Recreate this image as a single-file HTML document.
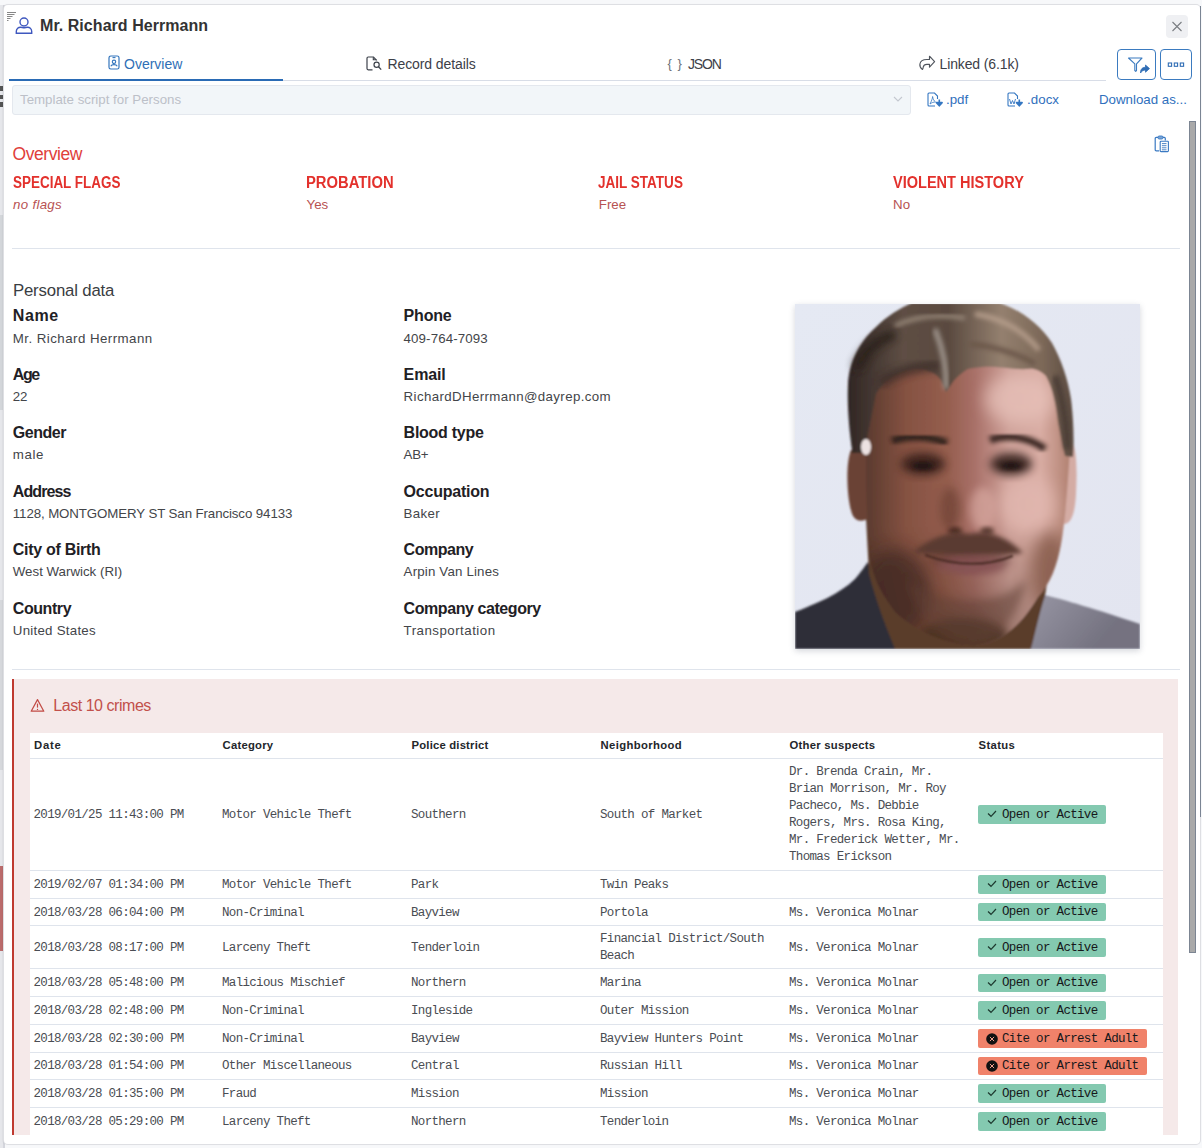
<!DOCTYPE html>
<html><head><meta charset="utf-8">
<style>
html,body{margin:0;padding:0;width:1202px;height:1148px;overflow:hidden;background:#f7f8fa;}
body{position:relative;font-family:"Liberation Sans",sans-serif;}
.a{position:absolute;white-space:nowrap;}
.t{position:absolute;white-space:nowrap;line-height:1;}
.mono{font-family:"Liberation Mono",monospace;}
#modal{position:absolute;left:4px;top:5px;width:1196px;height:1139px;background:#fff;border-radius:4px;box-shadow:0 0 0 1px #dedfe3, -1px 0 2px rgba(0,0,0,.12);}
#rb{position:absolute;left:1200px;top:6px;width:1px;height:811px;background:#7b8594;}
.lbl{font-weight:bold;font-size:15px;color:#1f2125;}
.val{font-size:13px;color:#434549;}
.red{color:#e3312c;font-weight:bold;font-size:14px;letter-spacing:-0.3px;}
.rval{color:#b75252;font-size:13px;}
.hr{position:absolute;height:1px;background:#dfe4ec;}
</style></head><body>
<!-- left strip -->
<div class="a" style="left:0;top:5px;width:4px;height:1143px;background:#e6e7eb"></div>
<div class="a" style="left:2.5px;top:5px;width:2px;height:1143px;background:#d4d5dc"></div>
<div class="a" style="left:0;top:86px;width:3px;height:5px;background:#555"></div>
<div class="a" style="left:0;top:95px;width:3px;height:4px;background:#555"></div>
<div class="a" style="left:0;top:102px;width:3px;height:5px;background:#555"></div>
<div class="a" style="left:0;top:866px;width:3px;height:85px;background:#bb6c6c"></div>
<div class="a" style="left:0;top:215px;width:3px;height:195px;background:#d3d6da"></div>
<div class="a" style="left:0;top:600px;width:3px;height:170px;background:#d6d8dc"></div>

<div id="modal"></div>
<div id="rb"></div>

<!-- header -->
<svg class="a" style="left:7px;top:12px" width="10" height="9" viewBox="0 0 10 9">
 <g fill="#6a6a6a"><rect x="0" y="0" width="9" height="0.8"/><rect x="0" y="2" width="7.5" height="0.8"/><rect x="0" y="4" width="5.5" height="0.8"/><rect x="0" y="6" width="3.5" height="0.8"/><rect x="0" y="8" width="1.5" height="0.8"/></g>
</svg>
<svg class="a" style="left:15px;top:17px" width="18" height="17" viewBox="0 0 18 17">
 <circle cx="9" cy="5" r="4" fill="none" stroke="#3f58bf" stroke-width="1.4"/>
 <path d="M1.3 16.2 H16.7 V14.5 C16.7 11.6 14.5 10.2 12.5 10.2 C11 10.2 10.3 10.8 9 10.8 C7.7 10.8 7 10.2 5.5 10.2 C3.5 10.2 1.3 11.6 1.3 14.5 Z" fill="none" stroke="#3f58bf" stroke-width="1.4"/>
</svg>
<div class="t" style="left:40px;top:17.5px;font-size:16px;font-weight:bold;color:#333;letter-spacing:0.05px">Mr. Richard Herrmann</div>

<!-- close -->
<div class="a" style="left:1166px;top:15px;width:22px;height:23px;background:#eff0f3;border-radius:4px"></div>
<svg class="a" style="left:1166px;top:15px" width="22" height="23" viewBox="0 0 22 23">
 <path d="M6.5 7 L15.5 16 M15.5 7 L6.5 16" stroke="#7a7d82" stroke-width="1.1"/>
</svg>

<!-- tabs -->
<div class="a" style="left:9px;top:80px;width:1097px;height:1px;background:#d8dde7"></div>
<div class="a" style="left:9px;top:79px;width:274px;height:2px;background:#2a6bb5"></div>
<svg class="a" style="left:108px;top:55px" width="12" height="15" viewBox="0 0 12 15">
 <rect x="1" y="1" width="10" height="13" rx="1.8" fill="none" stroke="#3476bd" stroke-width="1.2"/>
 <path d="M4.5 2.6 H7.5" stroke="#3476bd" stroke-width="1.1"/>
 <circle cx="6" cy="6.8" r="1.7" fill="none" stroke="#3476bd" stroke-width="1.1"/>
 <path d="M2.8 11.3 C3.3 9.9 4.3 9.6 6 9.6 C7.7 9.6 8.7 9.9 9.2 11.3" fill="none" stroke="#3476bd" stroke-width="1.1"/>
</svg>
<div class="t" style="left:124px;top:56.5px;font-size:14px;color:#2f6fb6">Overview</div>

<svg class="a" style="left:365.5px;top:55.5px" width="18" height="16" viewBox="0 0 18 16">
 <path d="M6.5 13.8 H2.2 C1.5 13.8 1 13.3 1 12.6 V2.2 C1 1.5 1.5 1 2.2 1 H7.5 L10.5 4.2 V4.6" fill="none" stroke="#3d424b" stroke-width="1.2"/>
 <path d="M7.3 1.2 V3.8 H10.3" fill="none" stroke="#3d424b" stroke-width="1.1"/>
 <circle cx="10.6" cy="8.8" r="2.6" fill="none" stroke="#3d424b" stroke-width="1.2"/>
 <path d="M12.5 10.8 L15.2 13.6" stroke="#3d424b" stroke-width="1.3"/>
</svg>
<div class="t" style="left:387.5px;top:56.5px;font-size:14px;color:#3c4048;letter-spacing:-0.1px">Record details</div>

<div class="t" style="left:667.5px;top:56.5px;font-size:13px;color:#6d7178;letter-spacing:1px">{ }</div>
<div class="t" style="left:688px;top:56.5px;font-size:14px;color:#3c4048;letter-spacing:-1.2px">JSON</div>

<svg class="a" style="left:918px;top:55px" width="18" height="16" viewBox="0 0 18 16">
 <path d="M11.5 1.2 L16.6 6.7 L11.5 12.2 V9.3 H8.8 C6.8 9.3 5.6 10.3 5.3 11.8 C5.2 12.8 5 13.8 4.5 14.5 C2.5 13 1.6 11 1.9 9 C2.4 6.3 5 4.5 8.8 4.5 H11.5 Z" fill="none" stroke="#50555d" stroke-width="1.15" stroke-linejoin="round"/>
</svg>
<div class="t" style="left:939.5px;top:56.5px;font-size:14px;color:#3c4048;letter-spacing:-0.12px">Linked (6.1k)</div>

<!-- buttons -->
<div class="a" style="left:1117px;top:49px;width:36.5px;height:29px;border:1.2px solid #3b7bc0;border-radius:4px"></div>
<svg class="a" style="left:1117px;top:49px" width="39" height="31" viewBox="0 0 39 31">
 <path d="M11.5 9 H25 L19.5 14.8 V21.5 L18.7 22.3 L17.8 21.5 V14.8 Z" fill="none" stroke="#3b7bc0" stroke-width="1.1" stroke-linejoin="round"/>
 <path d="M23.5 24 C23.5 20 25.5 18.3 28.5 18.3 V16 L32.5 19.6 L28.5 23.2 V21 C26.3 21 24.8 22 23.5 24 Z" fill="#2f6db5" stroke="#2f6db5" stroke-width="0.8" stroke-linejoin="round"/>
</svg>
<div class="a" style="left:1160px;top:49px;width:30px;height:29px;border:1.2px solid #3b7bc0;border-radius:4px"></div>
<svg class="a" style="left:1160px;top:49px" width="33" height="31" viewBox="0 0 33 31">
 <g fill="none" stroke="#2f6db5" stroke-width="1.1"><rect x="8.3" y="14" width="3.3" height="3.3"/><rect x="14.3" y="14" width="3.3" height="3.3"/><rect x="20.3" y="14" width="3.3" height="3.3"/></g>
</svg>

<!-- select -->
<div class="a" style="left:12px;top:85px;width:897px;height:28px;background:#f2f6f9;border:1px solid #e4e8ee;border-radius:3px"></div>
<div class="t" style="left:20px;top:93px;font-size:13.3px;color:#bcc0c8">Template script for Persons</div>
<svg class="a" style="left:892px;top:94px" width="12" height="10" viewBox="0 0 12 10">
 <path d="M2 3 L6 7 L10 3" fill="none" stroke="#c4c8d0" stroke-width="1.1"/>
</svg>

<!-- download links -->
<svg class="a" style="left:927px;top:92px" width="17" height="16" viewBox="0 0 17 16">
 <path d="M8 14 H2 C1.4 14 1 13.6 1 13 V2 C1 1.4 1.4 1 2 1 H7.5 L10.5 4 V7" fill="none" stroke="#3577c2" stroke-width="1.1"/>
 <path d="M3 12 C4.5 9 5.5 6.5 5.6 4.5 C6 7 7 9 8.5 10 C6.5 10 5 10.5 3 12" fill="none" stroke="#3577c2" stroke-width="0.8"/>
 <path d="M12.3 7.5 V12.5 M9.5 10.6 L12.3 13.8 L15.1 10.6 Z" fill="#3577c2" stroke="#3577c2" stroke-width="1.6" stroke-linejoin="round"/>
</svg>
<div class="t" style="left:946px;top:92.5px;font-size:13.3px;color:#2f70bd">.pdf</div>
<svg class="a" style="left:1007px;top:92px" width="17" height="16" viewBox="0 0 17 16">
 <path d="M8 14 H2 C1.4 14 1 13.6 1 13 V2 C1 1.4 1.4 1 2 1 H7.5 L10.5 4 V7" fill="none" stroke="#3577c2" stroke-width="1.1"/>
 <path d="M2.5 7 L4 12 L5.5 8.5 L7 12 L8.5 7" fill="none" stroke="#3577c2" stroke-width="0.9"/>
 <path d="M12.3 7.5 V12.5 M9.5 10.6 L12.3 13.8 L15.1 10.6 Z" fill="#3577c2" stroke="#3577c2" stroke-width="1.6" stroke-linejoin="round"/>
</svg>
<div class="t" style="left:1027px;top:92.5px;font-size:13.3px;color:#2f70bd;letter-spacing:0.05px">.docx</div>
<div class="t" style="left:1099px;top:92.5px;font-size:13.3px;color:#2f70bd">Download as...</div>

<!-- scrollbar -->
<div class="a" style="left:1189px;top:121px;width:5px;height:830px;background:#a9a9a9;border:1px solid #7c8592"></div>

<!-- clipboard -->
<svg class="a" style="left:1154px;top:135px" width="16" height="18" viewBox="0 0 16 18">
 <path d="M5.2 15.8 H2.3 C1.6 15.8 1.2 15.4 1.2 14.7 V3.4 C1.2 2.8 1.6 2.4 2.3 2.4 H10.3 C10.9 2.4 11.3 2.8 11.3 3.4 V5.5" fill="none" stroke="#3a79c2" stroke-width="1.2"/>
 <rect x="4" y="1" width="5" height="3" rx="1.2" fill="#7aa6d8" stroke="#3a79c2" stroke-width="0.9"/>
 <rect x="6.2" y="6.2" width="8.2" height="10.4" rx="0.8" fill="#fff" stroke="#3a79c2" stroke-width="1.1"/>
 <path d="M7.9 8.6 H12.5 M7.9 10.7 H12.5 M7.9 12.8 H12.5 M7.9 14.8 H12.5" stroke="#2f6fbb" stroke-width="0.85"/>
</svg>


<div class="t" style="left:12.5px;top:145.72px;font:normal normal 17.5px/1 'Liberation Sans';color:#e0403b;letter-spacing:-0.429px;">Overview</div>
<div class="t" style="left:12.6px;top:174.64px;font:normal bold 15.6px/1 'Liberation Sans';color:#e3312c;letter-spacing:0.000px;transform:scaleX(0.8629);transform-origin:0 0;">SPECIAL FLAGS</div>
<div class="t" style="left:13.1px;top:197.50px;font:italic normal 13.3px/1 'Liberation Sans';color:#b75252;letter-spacing:0.286px;">no flags</div>
<div class="t" style="left:306px;top:174.64px;font:normal bold 15.6px/1 'Liberation Sans';color:#e3312c;letter-spacing:0.000px;transform:scaleX(0.9484);transform-origin:0 0;">PROBATION</div>
<div class="t" style="left:306.5px;top:197.50px;font:normal normal 13.3px/1 'Liberation Sans';color:#b75252;letter-spacing:0.000px;">Yes</div>
<div class="t" style="left:598.3px;top:174.64px;font:normal bold 15.6px/1 'Liberation Sans';color:#e3312c;letter-spacing:0.000px;transform:scaleX(0.8673);transform-origin:0 0;">JAIL STATUS</div>
<div class="t" style="left:598.8px;top:197.50px;font:normal normal 13.3px/1 'Liberation Sans';color:#b75252;letter-spacing:0.000px;">Free</div>
<div class="t" style="left:892.6px;top:174.64px;font:normal bold 15.6px/1 'Liberation Sans';color:#e3312c;letter-spacing:0.000px;transform:scaleX(0.9321);transform-origin:0 0;">VIOLENT HISTORY</div>
<div class="t" style="left:893.1px;top:197.50px;font:normal normal 13.3px/1 'Liberation Sans';color:#b75252;letter-spacing:0.000px;">No</div>
<div class="hr" style="left:12px;top:248px;width:1168px"></div>
<div class="t" style="left:12.9px;top:282.72px;font:normal normal 16.8px/1 'Liberation Sans';color:#3a3d42;letter-spacing:-0.167px;">Personal data</div>
<div class="t" style="left:12.8px;top:308.30px;font:normal bold 16px/1 'Liberation Sans';color:#1f2125;letter-spacing:0.567px;">Name</div>
<div class="t" style="left:12.8px;top:331.59px;font:normal normal 13.3px/1 'Liberation Sans';color:#434549;letter-spacing:0.453px;">Mr. Richard Herrmann</div>
<div class="t" style="left:403.6px;top:308.30px;font:normal bold 16px/1 'Liberation Sans';color:#1f2125;letter-spacing:-0.200px;">Phone</div>
<div class="t" style="left:403.6px;top:331.59px;font:normal normal 13.3px/1 'Liberation Sans';color:#434549;letter-spacing:0.109px;">409-764-7093</div>
<div class="t" style="left:12.8px;top:366.75px;font:normal bold 16px/1 'Liberation Sans';color:#1f2125;letter-spacing:-1.400px;">Age</div>
<div class="t" style="left:12.8px;top:390.04px;font:normal normal 13.3px/1 'Liberation Sans';color:#434549;letter-spacing:-0.300px;">22</div>
<div class="t" style="left:403.6px;top:366.75px;font:normal bold 16px/1 'Liberation Sans';color:#1f2125;letter-spacing:-0.125px;">Email</div>
<div class="t" style="left:403.6px;top:390.04px;font:normal normal 13.3px/1 'Liberation Sans';color:#434549;letter-spacing:0.365px;">RichardDHerrmann@dayrep.com</div>
<div class="t" style="left:12.8px;top:425.20px;font:normal bold 16px/1 'Liberation Sans';color:#1f2125;letter-spacing:-0.480px;">Gender</div>
<div class="t" style="left:12.8px;top:448.49px;font:normal normal 13.3px/1 'Liberation Sans';color:#434549;letter-spacing:0.600px;">male</div>
<div class="t" style="left:403.6px;top:425.20px;font:normal bold 16px/1 'Liberation Sans';color:#1f2125;letter-spacing:-0.267px;">Blood type</div>
<div class="t" style="left:403.6px;top:448.49px;font:normal normal 13.3px/1 'Liberation Sans';color:#434549;letter-spacing:-0.250px;">AB+</div>
<div class="t" style="left:12.8px;top:483.65px;font:normal bold 16px/1 'Liberation Sans';color:#1f2125;letter-spacing:-0.900px;">Address</div>
<div class="t" style="left:12.8px;top:506.94px;font:normal normal 13.3px/1 'Liberation Sans';color:#434549;letter-spacing:-0.105px;">1128, MONTGOMERY ST San Francisco 94133</div>
<div class="t" style="left:403.6px;top:483.65px;font:normal bold 16px/1 'Liberation Sans';color:#1f2125;letter-spacing:-0.233px;">Occupation</div>
<div class="t" style="left:403.6px;top:506.94px;font:normal normal 13.3px/1 'Liberation Sans';color:#434549;letter-spacing:0.325px;">Baker</div>
<div class="t" style="left:12.8px;top:542.10px;font:normal bold 16px/1 'Liberation Sans';color:#1f2125;letter-spacing:-0.292px;">City of Birth</div>
<div class="t" style="left:12.8px;top:565.40px;font:normal normal 13.3px/1 'Liberation Sans';color:#434549;letter-spacing:0.000px;">West Warwick (RI)</div>
<div class="t" style="left:403.6px;top:542.10px;font:normal bold 16px/1 'Liberation Sans';color:#1f2125;letter-spacing:-0.467px;">Company</div>
<div class="t" style="left:403.6px;top:565.40px;font:normal normal 13.3px/1 'Liberation Sans';color:#434549;letter-spacing:0.171px;">Arpin Van Lines</div>
<div class="t" style="left:12.8px;top:600.55px;font:normal bold 16px/1 'Liberation Sans';color:#1f2125;letter-spacing:-0.433px;">Country</div>
<div class="t" style="left:12.8px;top:623.85px;font:normal normal 13.3px/1 'Liberation Sans';color:#434549;letter-spacing:0.250px;">United States</div>
<div class="t" style="left:403.6px;top:600.55px;font:normal bold 16px/1 'Liberation Sans';color:#1f2125;letter-spacing:-0.427px;">Company category</div>
<div class="t" style="left:403.6px;top:623.85px;font:normal normal 13.3px/1 'Liberation Sans';color:#434549;letter-spacing:0.477px;">Transportation</div>
<div class="a" style="left:794.5px;top:304px;width:345px;height:345px;box-shadow:0 2px 6px rgba(60,70,90,.22);overflow:hidden;background:#e3e4ee">
<svg width="345" height="345" viewBox="0 0 345 345" style="display:block">
 <defs>
  <filter id="b1" x="-20%" y="-20%" width="140%" height="140%"><feGaussianBlur stdDeviation="1.2"/></filter>
  <filter id="b2" x="-20%" y="-20%" width="140%" height="140%"><feGaussianBlur stdDeviation="2"/></filter>
  <filter id="b4" x="-30%" y="-30%" width="160%" height="160%"><feGaussianBlur stdDeviation="4"/></filter>
  <filter id="b8" x="-50%" y="-50%" width="200%" height="200%"><feGaussianBlur stdDeviation="8"/></filter>
  <linearGradient id="bg" x1="0" y1="0" x2="1" y2="1"><stop offset="0" stop-color="#e5e9f3"/><stop offset="1" stop-color="#e3e5f0"/></linearGradient>
  <linearGradient id="sr" x1="236" y1="290" x2="300" y2="345" gradientUnits="userSpaceOnUse"><stop offset="0" stop-color="#9896a4"/><stop offset="1" stop-color="#747280"/></linearGradient>
  <linearGradient id="fg" x1="70" y1="0" x2="276" y2="0" gradientUnits="userSpaceOnUse">
   <stop offset="0" stop-color="#5a3a2e"/><stop offset="0.2" stop-color="#855242"/><stop offset="0.4" stop-color="#955e4e"/><stop offset="0.53" stop-color="#a87068"/><stop offset="0.7" stop-color="#cfa29a"/><stop offset="0.85" stop-color="#d9ada4"/><stop offset="1" stop-color="#b08070"/>
  </linearGradient>
  <linearGradient id="fv" x1="0" y1="220" x2="0" y2="340" gradientUnits="userSpaceOnUse"><stop offset="0" stop-color="#3c2418" stop-opacity="0"/><stop offset="1" stop-color="#3c2418" stop-opacity="0.35"/></linearGradient>
  <linearGradient id="hg" x1="50" y1="0" x2="280" y2="0" gradientUnits="userSpaceOnUse"><stop offset="0" stop-color="#2e2422"/><stop offset="0.25" stop-color="#5e4e44"/><stop offset="0.45" stop-color="#5a4a40"/><stop offset="0.68" stop-color="#94806f"/><stop offset="0.86" stop-color="#7c6858"/><stop offset="1" stop-color="#5a4a40"/></linearGradient>
  <clipPath id="fc"><path d="M70 100 C72 62 110 52 170 52 C240 50 276 65 276 122 C274 170 270 220 266 240 C262 262 255 280 243 293 C228 318 210 338 180 342 C150 342 118 325 100 308 C88 292 80 278 76 260 C72 230 70 180 72 100 Z"/></clipPath>
 </defs>
 <rect width="345" height="345" fill="url(#bg)"/>
 <g filter="url(#b1)">
 <!-- shirt left -->
 <path d="M0 308 C20 300 45 290 60 275 C66 268 70 262 73 258 L85 300 L105 345 L0 345 Z" fill="#2e2e38"/>
 <!-- shirt right -->
 <path d="M236 345 C238 325 240 305 246 290 C270 296 300 305 345 320 L345 345 Z" fill="url(#sr)"/>
 <!-- neck -->
 <path d="M71 214 L262 214 L250 292 C244 310 240 330 236 345 L100 345 C90 320 82 300 74 270 Z" fill="#5a3c2c"/>
 <!-- ears -->
 <path d="M56 146 C50 160 52 200 58 212 C62 218 68 218 74 214 L90 214 L90 150 Z" fill="#6a4234"/>
 <path d="M270 135 C280 132 283 150 281 190 C280 210 276 220 269 220 L250 220 L250 135 Z" fill="#d4aca4"/>
 <!-- face base -->
 <path d="M70 100 C72 62 110 52 170 52 C240 50 276 65 276 122 C274 170 270 220 266 240 C262 262 255 280 243 293 C228 318 210 338 180 342 C150 342 118 325 100 308 C88 292 80 278 76 260 C72 230 70 180 72 100 Z" fill="url(#fg)"/>
 <g clip-path="url(#fc)">
  <rect x="60" y="200" width="230" height="150" fill="url(#fv)"/>
  <ellipse cx="100" cy="290" rx="35" ry="45" fill="#3e2820" opacity="0.7" filter="url(#b8)"/>
  <ellipse cx="225" cy="95" rx="35" ry="25" fill="#e6c0b8" opacity="0.8" filter="url(#b8)"/>
  <ellipse cx="232" cy="200" rx="28" ry="28" fill="#e2b8b0" opacity="0.8" filter="url(#b8)"/>
  <ellipse cx="255" cy="268" rx="20" ry="40" fill="#8a5e50" opacity="0.9" filter="url(#b8)"/>
  <!-- eye sockets -->
  <ellipse cx="128" cy="160" rx="22" ry="11" fill="#3a241c" opacity="0.95" filter="url(#b4)"/>
  <ellipse cx="216" cy="160" rx="21" ry="11" fill="#3a2620" opacity="0.95" filter="url(#b4)"/>
  <!-- nose -->
  <ellipse cx="188" cy="205" rx="13" ry="22" fill="#d8a8a0" opacity="0.7" filter="url(#b4)"/>
  <ellipse cx="155" cy="205" rx="10" ry="22" fill="#6e4236" opacity="0.7" filter="url(#b4)"/>
  <ellipse cx="160" cy="227" rx="7" ry="4" fill="#4a2c24" filter="url(#b2)"/>
  <ellipse cx="192" cy="227" rx="7" ry="4" fill="#5a3a30" filter="url(#b2)"/>
  <ellipse cx="168" cy="332" rx="45" ry="18" fill="#4a3024" opacity="0.85" filter="url(#b4)"/>
  <ellipse cx="176" cy="256" rx="40" ry="10" fill="#5a3430" opacity="0.6" filter="url(#b4)"/>
  <!-- beard -->
  <path d="M112 275 C120 310 145 338 178 340 C205 338 225 310 232 275 C215 290 200 296 175 296 C150 296 128 290 112 275 Z" fill="#604034" opacity="0.55" filter="url(#b4)"/>
 </g>
 <!-- hair -->
 <path d="M57 146 C54 125 52 100 53 80 C54 60 62 40 81 23 C92 12 105 4 117 -1 L205 -1 C225 6 245 20 257 39 C266 55 273 75 276 95 C279 120 279 140 278 153 L270 152 C267 140 265 128 263 118 C261 100 258 85 251 72 C245 66 238 64 233 65 C220 66 200 62 188 63 C180 64 176 64 173 65 C165 70 160 75 158 78 C155 82 153 86 151 88 C148 80 146 76 145 75 C140 68 130 65 120 65 C110 66 100 70 90 78 C85 84 82 88 81 90 C79 100 77 110 75 120 C73 128 72 134 72 140 L74 149 L56 149 Z" fill="url(#hg)"/>
 <path d="M62 65 C70 45 85 35 100 30" fill="none" stroke="#2a201c" stroke-width="10" filter="url(#b4)"/>
 <path d="M85 80 C100 68 120 62 145 62" fill="none" stroke="#3a2c26" stroke-width="8" filter="url(#b4)"/>
 <path d="M140 25 C148 45 152 65 151 85" fill="none" stroke="#a0968e" stroke-width="5" filter="url(#b2)"/>
 <path d="M100 22 C120 12 145 10 170 14" fill="none" stroke="#9a8a7c" stroke-width="4" filter="url(#b2)"/>
 <path d="M180 10 C205 14 228 26 244 46" fill="none" stroke="#b49c8a" stroke-width="5" filter="url(#b2)"/>
 <path d="M175 40 C195 42 220 48 240 60" fill="none" stroke="#6a5648" stroke-width="5" filter="url(#b2)"/>
 <path d="M260 72 C267 92 271 115 273 145" fill="none" stroke="#4e4038" stroke-width="8" filter="url(#b2)"/>
 <!-- light spot -->
 <ellipse cx="71" cy="143" rx="5" ry="8" fill="#ece2e2"/>
 <!-- eyebrows -->
 <path d="M97 137 C112 131 135 132 152 139" stroke="#2e201a" stroke-width="7.5" fill="none" filter="url(#b2)"/>
 <path d="M195 136 C210 130 232 132 250 145" stroke="#3a2820" stroke-width="7.5" fill="none" filter="url(#b2)"/>
 <!-- eyes -->
 <ellipse cx="128" cy="162" rx="11" ry="4" fill="#221816" filter="url(#b2)"/>
 <ellipse cx="216" cy="162" rx="11" ry="4" fill="#221816" filter="url(#b2)"/>
 <!-- mustache -->
 <path d="M118 248 C138 232 158 226 174 230 C192 226 212 232 228 249 C205 252 190 250 174 251 C155 250 140 252 118 248 Z" fill="#5a3a30" filter="url(#b2)"/>
 <!-- mouth -->
 <ellipse cx="176" cy="262" rx="34" ry="8" fill="#8a5558" opacity="0.85" filter="url(#b4)"/>
 <path d="M130 251 C160 262 190 263 218 252" stroke="#4e2e28" stroke-width="2.5" fill="none"/>
 </g>
</svg></div>

<div class="hr" style="left:12px;top:669px;width:1168px"></div>
<style>
.th{font-weight:bold;font-size:11.5px;color:#23262b}
.td{font-size:12.5px;line-height:17px;color:#4a4d53;letter-spacing:-0.68px}
.badge{height:18.5px;border-radius:2px}
.badge.g{background:#84c9b0}
.badge.r{background:#f0826a}
.bt{position:absolute;left:24px;top:1.6px;font-family:"Liberation Mono",monospace;font-size:12.5px;line-height:17px;color:#16181b;letter-spacing:-0.68px}
</style>
<div class="a" style="left:12px;top:679px;width:1166px;height:456px;background:#f5e9e9"></div>
<div class="a" style="left:12px;top:679px;width:2px;height:456px;background:#bf3a30"></div>
<svg class="a" style="left:30px;top:698px" width="15" height="15" viewBox="0 0 15 15">
 <path d="M7.5 1.6 L13.8 13.2 H1.2 Z" fill="none" stroke="#c24b45" stroke-width="1.2" stroke-linejoin="round"/>
 <path d="M7.5 5.6 V9.6" stroke="#c24b45" stroke-width="1.2"/><circle cx="7.5" cy="11.4" r="0.7" fill="#c24b45"/>
</svg>
<div class="t" style="left:53.3px;top:698.20px;font:normal normal 16px/1 'Liberation Sans';color:#c2504b;letter-spacing:-0.462px;">Last 10 crimes</div>
<div class="a" style="left:30px;top:733px;width:1133px;height:402px;background:#fff"></div>
<div class="t" style="left:34.0px;top:740.00px;font:normal bold 11.3px/1 'Liberation Sans';color:#23262b;letter-spacing:0.733px;">Date</div>
<div class="t" style="left:222.5px;top:740.00px;font:normal bold 11.3px/1 'Liberation Sans';color:#23262b;letter-spacing:0.229px;">Category</div>
<div class="t" style="left:411.5px;top:740.00px;font:normal bold 11.3px/1 'Liberation Sans';color:#23262b;letter-spacing:0.186px;">Police district</div>
<div class="t" style="left:600.5px;top:740.00px;font:normal bold 11.3px/1 'Liberation Sans';color:#23262b;letter-spacing:0.355px;">Neighborhood</div>
<div class="t" style="left:789.5px;top:740.00px;font:normal bold 11.3px/1 'Liberation Sans';color:#23262b;letter-spacing:0.254px;">Other suspects</div>
<div class="t" style="left:978.5px;top:740.00px;font:normal bold 11.3px/1 'Liberation Sans';color:#23262b;letter-spacing:0.360px;">Status</div>
<div class="a" style="left:30px;top:758.0px;width:1133px;height:1px;background:#dfe4ec"></div>
<div class="a" style="left:30px;top:870.1px;width:1133px;height:1px;background:#dfe4ec"></div>
<div class="a" style="left:30px;top:897.9px;width:1133px;height:1px;background:#dfe4ec"></div>
<div class="a" style="left:30px;top:925.4px;width:1133px;height:1px;background:#dfe4ec"></div>
<div class="a" style="left:30px;top:968.4px;width:1133px;height:1px;background:#dfe4ec"></div>
<div class="a" style="left:30px;top:996.1px;width:1133px;height:1px;background:#dfe4ec"></div>
<div class="a" style="left:30px;top:1023.9px;width:1133px;height:1px;background:#dfe4ec"></div>
<div class="a" style="left:30px;top:1051.9px;width:1133px;height:1px;background:#dfe4ec"></div>
<div class="a" style="left:30px;top:1078.8px;width:1133px;height:1px;background:#dfe4ec"></div>
<div class="a" style="left:30px;top:1107.2px;width:1133px;height:1px;background:#dfe4ec"></div>
<div class="a mono td" style="left:33.5px;top:806.95px">2019/01/25 11:43:00 PM</div>
<div class="a mono td" style="left:222px;top:806.95px">Motor Vehicle Theft</div>
<div class="a mono td" style="left:411px;top:806.95px">Southern</div>
<div class="a mono td" style="left:600px;top:806.95px">South of Market</div>
<div class="a mono td" style="left:789px;top:764.45px">Dr. Brenda Crain, Mr.<br>Brian Morrison, Mr. Roy<br>Pacheco, Ms. Debbie<br>Rogers, Mrs. Rosa King,<br>Mr. Frederick Wetter, Mr.<br>Thomas Erickson</div>
<div class="a badge g" style="left:978px;top:805.30px;width:128px"><svg class="a" style="left:9px;top:5px" width="10" height="8" viewBox="0 0 10 8"><path d="M1 3.5 L4 6.3 L9 1" fill="none" stroke="#1e3a30" stroke-width="1.2"/></svg><span class="bt">Open or Active</span></div>
<div class="a mono td" style="left:33.5px;top:876.90px">2019/02/07 01:34:00 PM</div>
<div class="a mono td" style="left:222px;top:876.90px">Motor Vehicle Theft</div>
<div class="a mono td" style="left:411px;top:876.90px">Park</div>
<div class="a mono td" style="left:600px;top:876.90px">Twin Peaks</div>
<div class="a badge g" style="left:978px;top:875.25px;width:128px"><svg class="a" style="left:9px;top:5px" width="10" height="8" viewBox="0 0 10 8"><path d="M1 3.5 L4 6.3 L9 1" fill="none" stroke="#1e3a30" stroke-width="1.2"/></svg><span class="bt">Open or Active</span></div>
<div class="a mono td" style="left:33.5px;top:904.55px">2018/03/28 06:04:00 PM</div>
<div class="a mono td" style="left:222px;top:904.55px">Non-Criminal</div>
<div class="a mono td" style="left:411px;top:904.55px">Bayview</div>
<div class="a mono td" style="left:600px;top:904.55px">Portola</div>
<div class="a mono td" style="left:789px;top:904.55px">Ms. Veronica Molnar</div>
<div class="a badge g" style="left:978px;top:902.90px;width:128px"><svg class="a" style="left:9px;top:5px" width="10" height="8" viewBox="0 0 10 8"><path d="M1 3.5 L4 6.3 L9 1" fill="none" stroke="#1e3a30" stroke-width="1.2"/></svg><span class="bt">Open or Active</span></div>
<div class="a mono td" style="left:33.5px;top:939.80px">2018/03/28 08:17:00 PM</div>
<div class="a mono td" style="left:222px;top:939.80px">Larceny Theft</div>
<div class="a mono td" style="left:411px;top:939.80px">Tenderloin</div>
<div class="a mono td" style="left:600px;top:931.30px">Financial District/South<br>Beach</div>
<div class="a mono td" style="left:789px;top:939.80px">Ms. Veronica Molnar</div>
<div class="a badge g" style="left:978px;top:938.15px;width:128px"><svg class="a" style="left:9px;top:5px" width="10" height="8" viewBox="0 0 10 8"><path d="M1 3.5 L4 6.3 L9 1" fill="none" stroke="#1e3a30" stroke-width="1.2"/></svg><span class="bt">Open or Active</span></div>
<div class="a mono td" style="left:33.5px;top:975.15px">2018/03/28 05:48:00 PM</div>
<div class="a mono td" style="left:222px;top:975.15px">Malicious Mischief</div>
<div class="a mono td" style="left:411px;top:975.15px">Northern</div>
<div class="a mono td" style="left:600px;top:975.15px">Marina</div>
<div class="a mono td" style="left:789px;top:975.15px">Ms. Veronica Molnar</div>
<div class="a badge g" style="left:978px;top:973.50px;width:128px"><svg class="a" style="left:9px;top:5px" width="10" height="8" viewBox="0 0 10 8"><path d="M1 3.5 L4 6.3 L9 1" fill="none" stroke="#1e3a30" stroke-width="1.2"/></svg><span class="bt">Open or Active</span></div>
<div class="a mono td" style="left:33.5px;top:1002.90px">2018/03/28 02:48:00 PM</div>
<div class="a mono td" style="left:222px;top:1002.90px">Non-Criminal</div>
<div class="a mono td" style="left:411px;top:1002.90px">Ingleside</div>
<div class="a mono td" style="left:600px;top:1002.90px">Outer Mission</div>
<div class="a mono td" style="left:789px;top:1002.90px">Ms. Veronica Molnar</div>
<div class="a badge g" style="left:978px;top:1001.25px;width:128px"><svg class="a" style="left:9px;top:5px" width="10" height="8" viewBox="0 0 10 8"><path d="M1 3.5 L4 6.3 L9 1" fill="none" stroke="#1e3a30" stroke-width="1.2"/></svg><span class="bt">Open or Active</span></div>
<div class="a mono td" style="left:33.5px;top:1030.80px">2018/03/28 02:30:00 PM</div>
<div class="a mono td" style="left:222px;top:1030.80px">Non-Criminal</div>
<div class="a mono td" style="left:411px;top:1030.80px">Bayview</div>
<div class="a mono td" style="left:600px;top:1030.80px">Bayview Hunters Point</div>
<div class="a mono td" style="left:789px;top:1030.80px">Ms. Veronica Molnar</div>
<div class="a badge r" style="left:978px;top:1029.15px;width:169px"><svg class="a" style="left:8px;top:3.5px" width="12" height="12" viewBox="0 0 12 12"><circle cx="6" cy="6" r="5.8" fill="#111"/><path d="M3.9 3.9 L8.1 8.1 M8.1 3.9 L3.9 8.1" stroke="#f3a18e" stroke-width="1"/></svg><span class="bt">Cite or Arrest Adult</span></div>
<div class="a mono td" style="left:33.5px;top:1058.25px">2018/03/28 01:54:00 PM</div>
<div class="a mono td" style="left:222px;top:1058.25px">Other Miscellaneous</div>
<div class="a mono td" style="left:411px;top:1058.25px">Central</div>
<div class="a mono td" style="left:600px;top:1058.25px">Russian Hill</div>
<div class="a mono td" style="left:789px;top:1058.25px">Ms. Veronica Molnar</div>
<div class="a badge r" style="left:978px;top:1056.60px;width:169px"><svg class="a" style="left:8px;top:3.5px" width="12" height="12" viewBox="0 0 12 12"><circle cx="6" cy="6" r="5.8" fill="#111"/><path d="M3.9 3.9 L8.1 8.1 M8.1 3.9 L3.9 8.1" stroke="#f3a18e" stroke-width="1"/></svg><span class="bt">Cite or Arrest Adult</span></div>
<div class="a mono td" style="left:33.5px;top:1085.90px">2018/03/28 01:35:00 PM</div>
<div class="a mono td" style="left:222px;top:1085.90px">Fraud</div>
<div class="a mono td" style="left:411px;top:1085.90px">Mission</div>
<div class="a mono td" style="left:600px;top:1085.90px">Mission</div>
<div class="a mono td" style="left:789px;top:1085.90px">Ms. Veronica Molnar</div>
<div class="a badge g" style="left:978px;top:1084.25px;width:128px"><svg class="a" style="left:9px;top:5px" width="10" height="8" viewBox="0 0 10 8"><path d="M1 3.5 L4 6.3 L9 1" fill="none" stroke="#1e3a30" stroke-width="1.2"/></svg><span class="bt">Open or Active</span></div>
<div class="a mono td" style="left:33.5px;top:1113.75px">2018/03/28 05:29:00 PM</div>
<div class="a mono td" style="left:222px;top:1113.75px">Larceny Theft</div>
<div class="a mono td" style="left:411px;top:1113.75px">Northern</div>
<div class="a mono td" style="left:600px;top:1113.75px">Tenderloin</div>
<div class="a mono td" style="left:789px;top:1113.75px">Ms. Veronica Molnar</div>
<div class="a badge g" style="left:978px;top:1112.10px;width:128px"><svg class="a" style="left:9px;top:5px" width="10" height="8" viewBox="0 0 10 8"><path d="M1 3.5 L4 6.3 L9 1" fill="none" stroke="#1e3a30" stroke-width="1.2"/></svg><span class="bt">Open or Active</span></div>
</body></html>
